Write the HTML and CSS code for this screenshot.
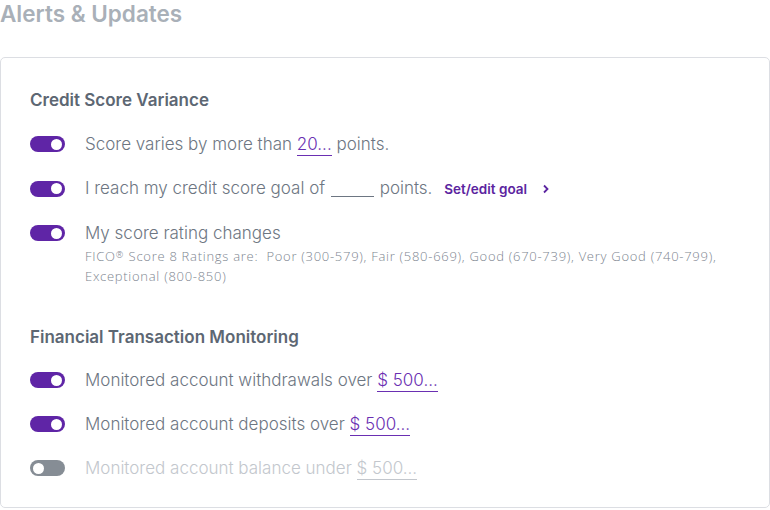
FILE: index.html
```html
<!DOCTYPE html>
<html>
<head>
<meta charset="utf-8">
<link rel="stylesheet" href="styles.css">
</head>
<body>
<h1 class="title">Alerts &amp; Updates</h1>
<div class="card">
  <section class="group">
    <h2 class="group-title">Credit Score Variance</h2>
    <div class="row">
      <span class="toggle on"><span class="knob"></span></span>
      <div class="label">Score varies by more than <span class="val">20...</span> points.</div>
    </div>
    <div class="row">
      <span class="toggle on"><span class="knob"></span></span>
      <div class="label">I reach my credit score goal of <span class="blank"></span> points. <a class="goal">Set/edit goal <svg class="chev" width="8" height="10" viewBox="0 0 8 10"><path d="M2 1.5 L5.5 5 L2 8.5" fill="none" stroke="#5b24a0" stroke-width="1.8"/></svg></a></div>
    </div>
    <div class="row multi">
      <span class="toggle on"><span class="knob"></span></span>
      <div class="label">My score rating changes
        <div class="note">FICO<span class="reg">®</span> Score 8 Ratings are:&nbsp; Poor (300-579), Fair (580-669), Good (670-739), Very Good (740-799), Exceptional (800-850)</div>
      </div>
    </div>
  </section>
  <section class="group">
    <h2 class="group-title">Financial Transaction Monitoring</h2>
    <div class="row">
      <span class="toggle on"><span class="knob"></span></span>
      <div class="label">Monitored account withdrawals over <span class="val">$ 500...</span></div>
    </div>
    <div class="row">
      <span class="toggle on"><span class="knob"></span></span>
      <div class="label">Monitored account deposits over <span class="val">$ 500...</span></div>
    </div>
    <div class="row disabled">
      <span class="toggle"><span class="knob"></span></span>
      <div class="label">Monitored account balance under <span class="val">$ 500...</span></div>
    </div>
  </section>
</div>
</body>
</html>
```
FILE: styles.css
```css
html, body { margin: 0; padding: 0; background: #fff; }
body { font-family: "Inter", "Liberation Sans", sans-serif; width: 770px; }
.title {
  margin: 0;
  font-size: 22.5px;
  line-height: 30px;
  font-weight: 600;
  color: #a9b0b8;
  margin-top: -1px;
}
.card {
  margin-top: 28px;
  border: 1px solid #dcdee3;
  border-radius: 5px;
  box-sizing: border-box;
  width: 770px;
  height: 451px;
  padding: 30px 29px 0 29px;
}
.group-title {
  margin: 0 0 20px 0;
  font-size: 17px;
  line-height: 24px;
  font-weight: 600;
  color: #5d6773;
}
.group + .group { margin-top: 39px; }
.group + .group .group-title { margin-bottom: 19px; }
.row {
  display: flex;
  align-items: center;
  gap: 20px;
  min-height: 24px;
  margin-bottom: 20px;
}
.row.multi { align-items: flex-start; }
.row.multi .toggle { margin-top: 4px; }
.toggle {
  flex: none;
  width: 35px;
  height: 16px;
  border-radius: 8px;
  background: #868d95;
  display: flex;
  align-items: center;
  padding: 0 3px;
  box-sizing: border-box;
}
.toggle.on { background: #5f25a6; justify-content: flex-end; }
.knob { width: 11px; height: 11px; border-radius: 50%; background: #fff; }
.label {
  font-size: 17px;
  line-height: 24px;
  color: #6d7682;
  font-weight: 300;
}
.val {
  color: #6a2fb2;
  border-bottom: 1px solid #6a2fb2;
  padding-bottom: 1px;
}
.blank {
  display: inline-block;
  width: 43px;
  border-bottom: 1px solid #6d7682;
  vertical-align: -3px;
  margin: 0 1px;
}
.goal {
  font-size: 13.5px;
  font-weight: 600;
  color: #5b24a0;
  margin-left: 7px;
}
.chev { margin-left: 12px; vertical-align: 0; }
.note {
  font-family: "Open Sans", "Liberation Sans", sans-serif;
  font-size: 13px;
  letter-spacing: 0.72px;
  line-height: 20px;
  color: #7d858f;
  margin-top: 1px;
  padding-right: 20px;
}
.reg { font-size: 9px; line-height: 0; vertical-align: 3px; letter-spacing: 0.3px; margin-right: 1px; }
.disabled .label { color: #c3c7cd; }
.disabled .val { color: #c3c7cd; border-bottom-color: #c3c7cd; }
```
